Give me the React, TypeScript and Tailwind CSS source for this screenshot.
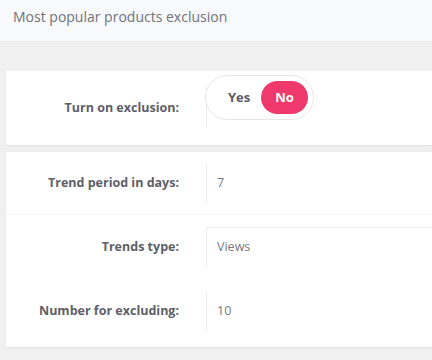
const font = { fontFamily: '"Open Sans", "Noto Sans", sans-serif' };

function Label({ children }: { children: string }) {
	return (
		<div className="w-[173px] shrink-0 text-right text-[12.5px] font-bold text-[#5d6068]">
			{children}
		</div>
	);
}

export default function App() {
	return (
		<div className="h-[360px] w-[432px] overflow-hidden bg-[#f0f0f0]" style={font}>
			{/* Header */}
			<div className="h-[42px] border-b border-[#ececec] bg-[#f8f9fb] pl-[13px] pt-[7px] text-[14px] leading-[20px] text-[#6f7279]">
				Most popular products exclusion
			</div>

			<div className="pl-[6px] pt-[29px]">
				{/* Exclusion toggle card */}
				<div className="flex h-[74px] items-start bg-white pt-[16px] shadow-[0_1px_2px_rgba(0,0,0,0.06)]">
					<div className="flex h-[40px] items-center pt-[2px]">
						<Label>Turn on exclusion:</Label>
					</div>
					<div className="ml-[27px] h-[40px] border-l border-[#ececec]">
						<div className="-ml-[2px] -mt-[12px] flex h-[45px] w-[109px] items-center rounded-full border border-[#e6e6e6] bg-white pl-[22px] pr-[5px]">
							<span className="text-[13px] font-bold text-[#585b63]">Yes</span>
							<span className="ml-auto flex h-[33px] w-[47px] items-center justify-center rounded-full bg-[#ef386b] text-[13px] font-bold text-white">
								No
							</span>
						</div>
					</div>
				</div>

				{/* Settings card */}
				<div className="mt-[7px] flex h-[195px] flex-col bg-white pt-[11px] shadow-[0_1px_2px_rgba(0,0,0,0.06)]">
					<div className="flex h-[52px] items-start border-b border-[#f8f8f8]">
						<div className="flex h-[40px] items-center">
							<Label>Trend period in days:</Label>
						</div>
						<div className="ml-[27px] flex h-[40px] flex-1 items-center border-l border-[#ececec] pl-[10px] text-[12.5px] text-[#75787e]">
							7
						</div>
					</div>
					<div className="mt-[12px] flex h-[40px] items-center">
						<Label>Trends type:</Label>
						<div className="ml-[27px] flex h-[40px] flex-1 items-center rounded-tl-[3px] border-l border-t border-[#ececec] pl-[10px] text-[12.5px] text-[#75787e]">
							Views
						</div>
					</div>
					<div className="mt-[24px] flex h-[40px] items-center">
						<Label>Number for excluding:</Label>
						<div className="ml-[27px] flex h-[40px] flex-1 items-center border-l border-[#ececec] pl-[10px] text-[12.5px] text-[#75787e]">
							10
						</div>
					</div>
				</div>
			</div>
		</div>
	);
}
